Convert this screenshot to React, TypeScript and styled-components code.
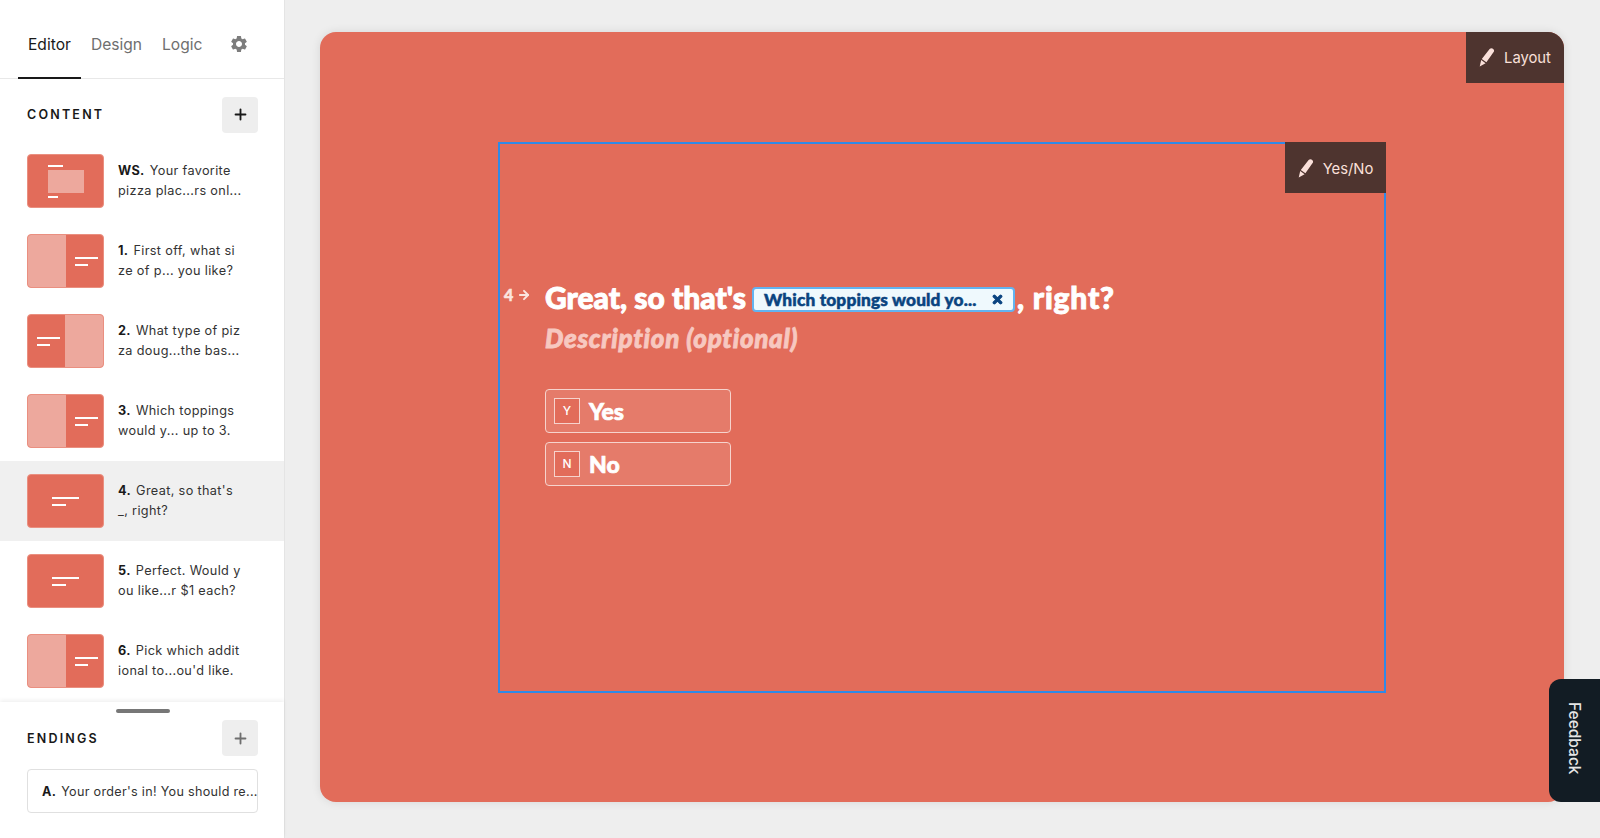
import React from "react";
import styled, { createGlobalStyle } from "styled-components";
import { MdSettings } from "react-icons/md";
import { FaTimes } from "react-icons/fa";
import { FiArrowRight, FiPlus } from "react-icons/fi";

const Global = createGlobalStyle`
  html, body { margin: 0; padding: 0; height: 100%; background: #eeeeee; overflow: hidden; }
  #root { height: 100%; }
  * { box-sizing: border-box; }
`;

const CORAL = "#e26c5a";
const DISPLAY = `"Lato", "Open Sans", sans-serif`;
const UI = `"Inter", "Liberation Sans", sans-serif`;

const Page = styled.div`
  display: flex;
  height: 838px;
  width: 1600px;
  font-family: ${UI};
  position: relative;
  overflow: hidden;
`;
const Sidebar = styled.aside`
  width: 285px;
  flex: none;
  background: #fff;
  border-right: 1px solid #e4e4e4;
  display: flex;
  flex-direction: column;
`;
const Tabs = styled.nav`
  height: 79px;
  flex: none;
  display: flex;
  align-items: flex-end;
  padding-left: 18px;
  border-bottom: 1px solid #e8e8e8;
`;
const Tab = styled.div<{ $active?: boolean }>`
  height: 79px;
  margin-bottom: -1px;
  padding: 36px 10px 0;
  font-size: 15.6px;
  line-height: 18px;
  color: ${(p) => (p.$active ? "#191919" : "#6f6f6f")};
  border-bottom: 2px solid ${(p) => (p.$active ? "#191919" : "transparent")};
`;
const Gear = styled.div`
  margin-left: 17px;
  height: 79px;
  padding-top: 35px;
  color: #7d7d7d;
  font-size: 20px;
  line-height: 0;
`;
const SectionHead = styled.div<{ $h: number; $pt?: number }>`
  height: ${(p) => p.$h}px;
  flex: none;
  padding: ${(p) => p.$pt ?? 0}px 26px 0 27px;
  display: flex;
  align-items: center;
  justify-content: space-between;
`;
const SectionTitle = styled.div`
  font-size: 12.5px;
  font-weight: 600;
  letter-spacing: 2.2px;
  color: #191919;
`;
const AddButton = styled.div<{ $muted?: boolean }>`
  width: 36px;
  height: 36px;
  border-radius: 4px;
  background: #eeeeee;
  display: flex;
  align-items: center;
  justify-content: center;
  color: ${(p) => (p.$muted ? "#6f6f6f" : "#191919")};
  font-size: 17px;
`;
const List = styled.div`
  flex: none;
  height: 561px;
  overflow: hidden;
`;
const Row = styled.div<{ $active?: boolean }>`
  height: 80px;
  display: flex;
  align-items: center;
  padding-left: 27px;
  background: ${(p) => (p.$active ? "#f0f0f0" : "transparent")};
`;
const Thumb = styled.div<{ $justify: string }>`
  width: 77px;
  height: 54px;
  flex: none;
  border-radius: 4px;
  background: ${CORAL};
  border: 1px solid #ea8f80;
  overflow: hidden;
  display: flex;
  align-items: center;
  justify-content: ${(p) => p.$justify};
`;
const SideImage = styled.div`
  width: 38px;
  flex: none;
  height: 100%;
  background: #eda89d;
`;
const Lines = styled.div<{ $w: number; $ml: number; $mr: number }>`
  width: ${(p) => p.$w}px;
  margin: 0 ${(p) => p.$mr}px 0 ${(p) => p.$ml}px;
  display: flex;
  flex-direction: column;
  gap: 5px;
`;
const Line = styled.div<{ $pct: number }>`
  width: ${(p) => p.$pct}%;
  height: 2px;
  background: #fff;
`;
const WelcomeStack = styled.div`
  width: 36px;
  display: flex;
  flex-direction: column;
  gap: 3px;
`;
const WelcomeImage = styled.div`
  height: 23px;
  background: #eda89d;
`;
const RowText = styled.div`
  margin-left: 14px;
  font-size: 12.7px;
  line-height: 20px;
  letter-spacing: 0.35px;
  color: #333;
  white-space: nowrap;
`;
const RowLabel = styled.b`
  font-weight: 700;
  color: #191919;
  margin-right: 5px;
`;
const Endings = styled.section`
  position: relative;
  flex: 1;
  box-shadow: 0 -2px 4px rgba(0, 0, 0, 0.06);
  padding-top: 18px;
`;
const Handle = styled.div`
  position: absolute;
  top: 7px;
  left: 116px;
  width: 54px;
  height: 4px;
  border-radius: 2px;
  background: #777;
`;
const EndingBox = styled.div`
  margin: 13px 26px 0 27px;
  height: 44px;
  border: 1px solid #e0e0e0;
  border-radius: 4px;
  padding-left: 14px;
  display: flex;
  align-items: center;
  font-size: 12.6px;
  letter-spacing: 0.3px;
  color: #333;
  white-space: nowrap;
`;
const Main = styled.main`
  flex: 1;
  padding: 32px 36px 36px 35px;
  display: flex;
`;
const Card = styled.div`
  position: relative;
  flex: 1;
  background: ${CORAL};
  border-radius: 16px;
  overflow: hidden;
  display: flex;
  align-items: center;
  justify-content: center;
  box-shadow: 0 0 10px rgba(0, 0, 0, 0.1);
`;
const Tag = styled.div<{ $w: number; $offset: number; $pt?: number }>`
  position: absolute;
  top: ${(p) => p.$offset}px;
  right: ${(p) => p.$offset}px;
  width: ${(p) => p.$w}px;
  height: 51px;
  padding-top: ${(p) => p.$pt ?? 0}px;
  background: #4e342f;
  color: #fae0da;
  font-size: 14.8px;
  display: flex;
  align-items: center;
  justify-content: center;
  gap: 9px;
`;
const Canvas = styled.div`
  position: relative;
  width: 888px;
  height: 551px;
  border: 2px solid #2f8ae6;
  padding: 137px 0 0 2px;
  display: flex;
  align-items: flex-start;
`;
const QuestionNumber = styled.div`
  width: 43px;
  flex: none;
  display: flex;
  align-items: center;
  gap: 4px;
  padding: 4px 0 0 2px;
  color: #fbe4df;
  font: 900 16px/20px ${DISPLAY};
  -webkit-text-stroke: 0.5px #fbe4df;
`;
const Body = styled.div`
  display: flex;
  flex-direction: column;
`;
const Question = styled.div`
  display: flex;
  align-items: center;
  height: 32px;
  color: #fff;
  font: 900 30px/32px ${DISPLAY};
  -webkit-text-stroke: 0.9px #fff;
  white-space: pre;
`;
const Closing = styled.span`
  letter-spacing: 0.8px;
`;
const Chip = styled.span`
  width: 263px;
  height: 25px;
  margin: 5px 2px 0 6px;
  padding: 0 9px 0 10px;
  border: 2px solid #63b3f0;
  border-radius: 4px;
  background: #eff9fd;
  color: #0a4480;
  font: 900 17.3px/21px ${DISPLAY};
  letter-spacing: 0.15px;
  -webkit-text-stroke: 0.5px #0a4480;
  display: flex;
  align-items: center;
  justify-content: space-between;
`;
const ChipClose = styled(FaTimes)`
  stroke: #0a4480;
  stroke-width: 40px;
`;
const Description = styled.div`
  margin-top: 9px;
  color: #f7c8c0;
  font: italic 900 26px/32px ${DISPLAY};
  letter-spacing: 0.7px;
  -webkit-text-stroke: 0.8px #f7c8c0;
`;
const Choices = styled.div`
  margin-top: 35px;
  display: flex;
  flex-direction: column;
  gap: 9px;
`;
const Choice = styled.div`
  width: 186px;
  height: 44px;
  border: 1px solid #f6d3cd;
  border-radius: 4px;
  background: rgba(255, 255, 255, 0.1);
  display: flex;
  align-items: center;
  padding-left: 8px;
  gap: 9px;
  color: #fff;
  font: 900 23px/28px ${DISPLAY};
  -webkit-text-stroke: 0.7px #fff;
`;
const Key = styled.span`
  width: 26px;
  height: 26px;
  border: 1px solid #f6d3cd;
  background: ${CORAL};
  display: flex;
  align-items: center;
  justify-content: center;
  font: 500 12px/1 ${UI};
  -webkit-text-stroke: 0;
`;
const Feedback = styled.div`
  position: absolute;
  right: 0;
  top: 679px;
  width: 51px;
  height: 123px;
  padding-bottom: 4px;
  background: #121c24;
  border-radius: 12px 0 0 12px;
  color: #e6e6e6;
  font-size: 15.5px;
  font-weight: 500;
  writing-mode: vertical-rl;
  display: flex;
  align-items: center;
  justify-content: center;
`;

const Pencil = () => (
  <svg width="16" height="19" viewBox="0 0 16 19" fill="#fae0da">
    <path d="M10.6 1.1c.9-1.1 2.3-1.2 3.4-.4 1.2.9 1.4 2.3.6 3.4L7.4 14.2 2.8 11zM2.2 12.1l4.4 3.1L.7 18.6z" />
  </svg>
);

type Kind = "welcome" | "left" | "right" | "plain";

const rows: { kind: Kind; label: string; first: string; second: string; active?: boolean }[] = [
  { kind: "welcome", label: "WS.", first: "Your favorite", second: "pizza plac...rs onl..." },
  { kind: "left", label: "1.", first: "First off, what si", second: "ze of p... you like?" },
  { kind: "right", label: "2.", first: "What type of piz", second: "za doug...the bas..." },
  { kind: "left", label: "3.", first: "Which toppings", second: "would y... up to 3." },
  { kind: "plain", label: "4.", first: "Great, so that's", second: "_, right?", active: true },
  { kind: "plain", label: "5.", first: "Perfect. Would y", second: "ou like...r $1 each?" },
  { kind: "left", label: "6.", first: "Pick which addit", second: "ional to...ou'd like." },
];

const ThumbArt = ({ kind }: { kind: Kind }) => {
  if (kind === "welcome")
    return (
      <Thumb $justify="center">
        <WelcomeStack>
          <Line $pct={43} />
          <WelcomeImage />
          <Line $pct={30} />
        </WelcomeStack>
      </Thumb>
    );
  if (kind === "left")
    return (
      <Thumb $justify="flex-start">
        <SideImage />
        <Lines $w={23} $ml={9} $mr={5}>
          <Line $pct={100} />
          <Line $pct={58} />
        </Lines>
      </Thumb>
    );
  if (kind === "right")
    return (
      <Thumb $justify="flex-end">
        <Lines $w={23} $ml={4} $mr={5}>
          <Line $pct={100} />
          <Line $pct={58} />
        </Lines>
        <SideImage />
      </Thumb>
    );
  return (
    <Thumb $justify="center">
      <Lines $w={27} $ml={0} $mr={0}>
        <Line $pct={100} />
        <Line $pct={50} />
      </Lines>
    </Thumb>
  );
};

export default function App() {
  return (
    <Page>
      <Global />
      <Sidebar>
        <Tabs>
          <Tab $active>Editor</Tab>
          <Tab>Design</Tab>
          <Tab>Logic</Tab>
          <Gear>
            <MdSettings />
          </Gear>
        </Tabs>
        <SectionHead $h={62} $pt={9}>
          <SectionTitle>CONTENT</SectionTitle>
          <AddButton>
            <FiPlus strokeWidth={2.6} />
          </AddButton>
        </SectionHead>
        <List>
          {rows.map((r) => (
            <Row key={r.label} $active={r.active}>
              <ThumbArt kind={r.kind} />
              <RowText>
                <RowLabel>{r.label}</RowLabel>
                {r.first}
                <br />
                {r.second}
              </RowText>
            </Row>
          ))}
        </List>
        <Endings>
          <Handle />
          <SectionHead $h={36}>
            <SectionTitle>ENDINGS</SectionTitle>
            <AddButton $muted>
              <FiPlus strokeWidth={2.6} />
            </AddButton>
          </SectionHead>
          <EndingBox>
            <RowLabel>A.</RowLabel>
            Your order's in! You should re...
          </EndingBox>
        </Endings>
      </Sidebar>
      <Main>
        <Card>
          <Tag $w={98} $offset={0}>
            <Pencil />
            Layout
          </Tag>
          <Canvas>
            <Tag $w={101} $offset={-2} $pt={3}>
              <Pencil />
              Yes/No
            </Tag>
            <QuestionNumber>
              4
              <FiArrowRight size={14} strokeWidth={3.4} />
            </QuestionNumber>
            <Body>
              <Question>
                Great, so that's
                <Chip>
                  Which toppings would yo...
                  <ChipClose size={13} />
                </Chip>
                <Closing>, right?</Closing>
              </Question>
              <Description>Description (optional)</Description>
              <Choices>
                <Choice>
                  <Key>Y</Key>
                  Yes
                </Choice>
                <Choice>
                  <Key>N</Key>
                  No
                </Choice>
              </Choices>
            </Body>
          </Canvas>
        </Card>
      </Main>
      <Feedback>Feedback</Feedback>
    </Page>
  );
}
